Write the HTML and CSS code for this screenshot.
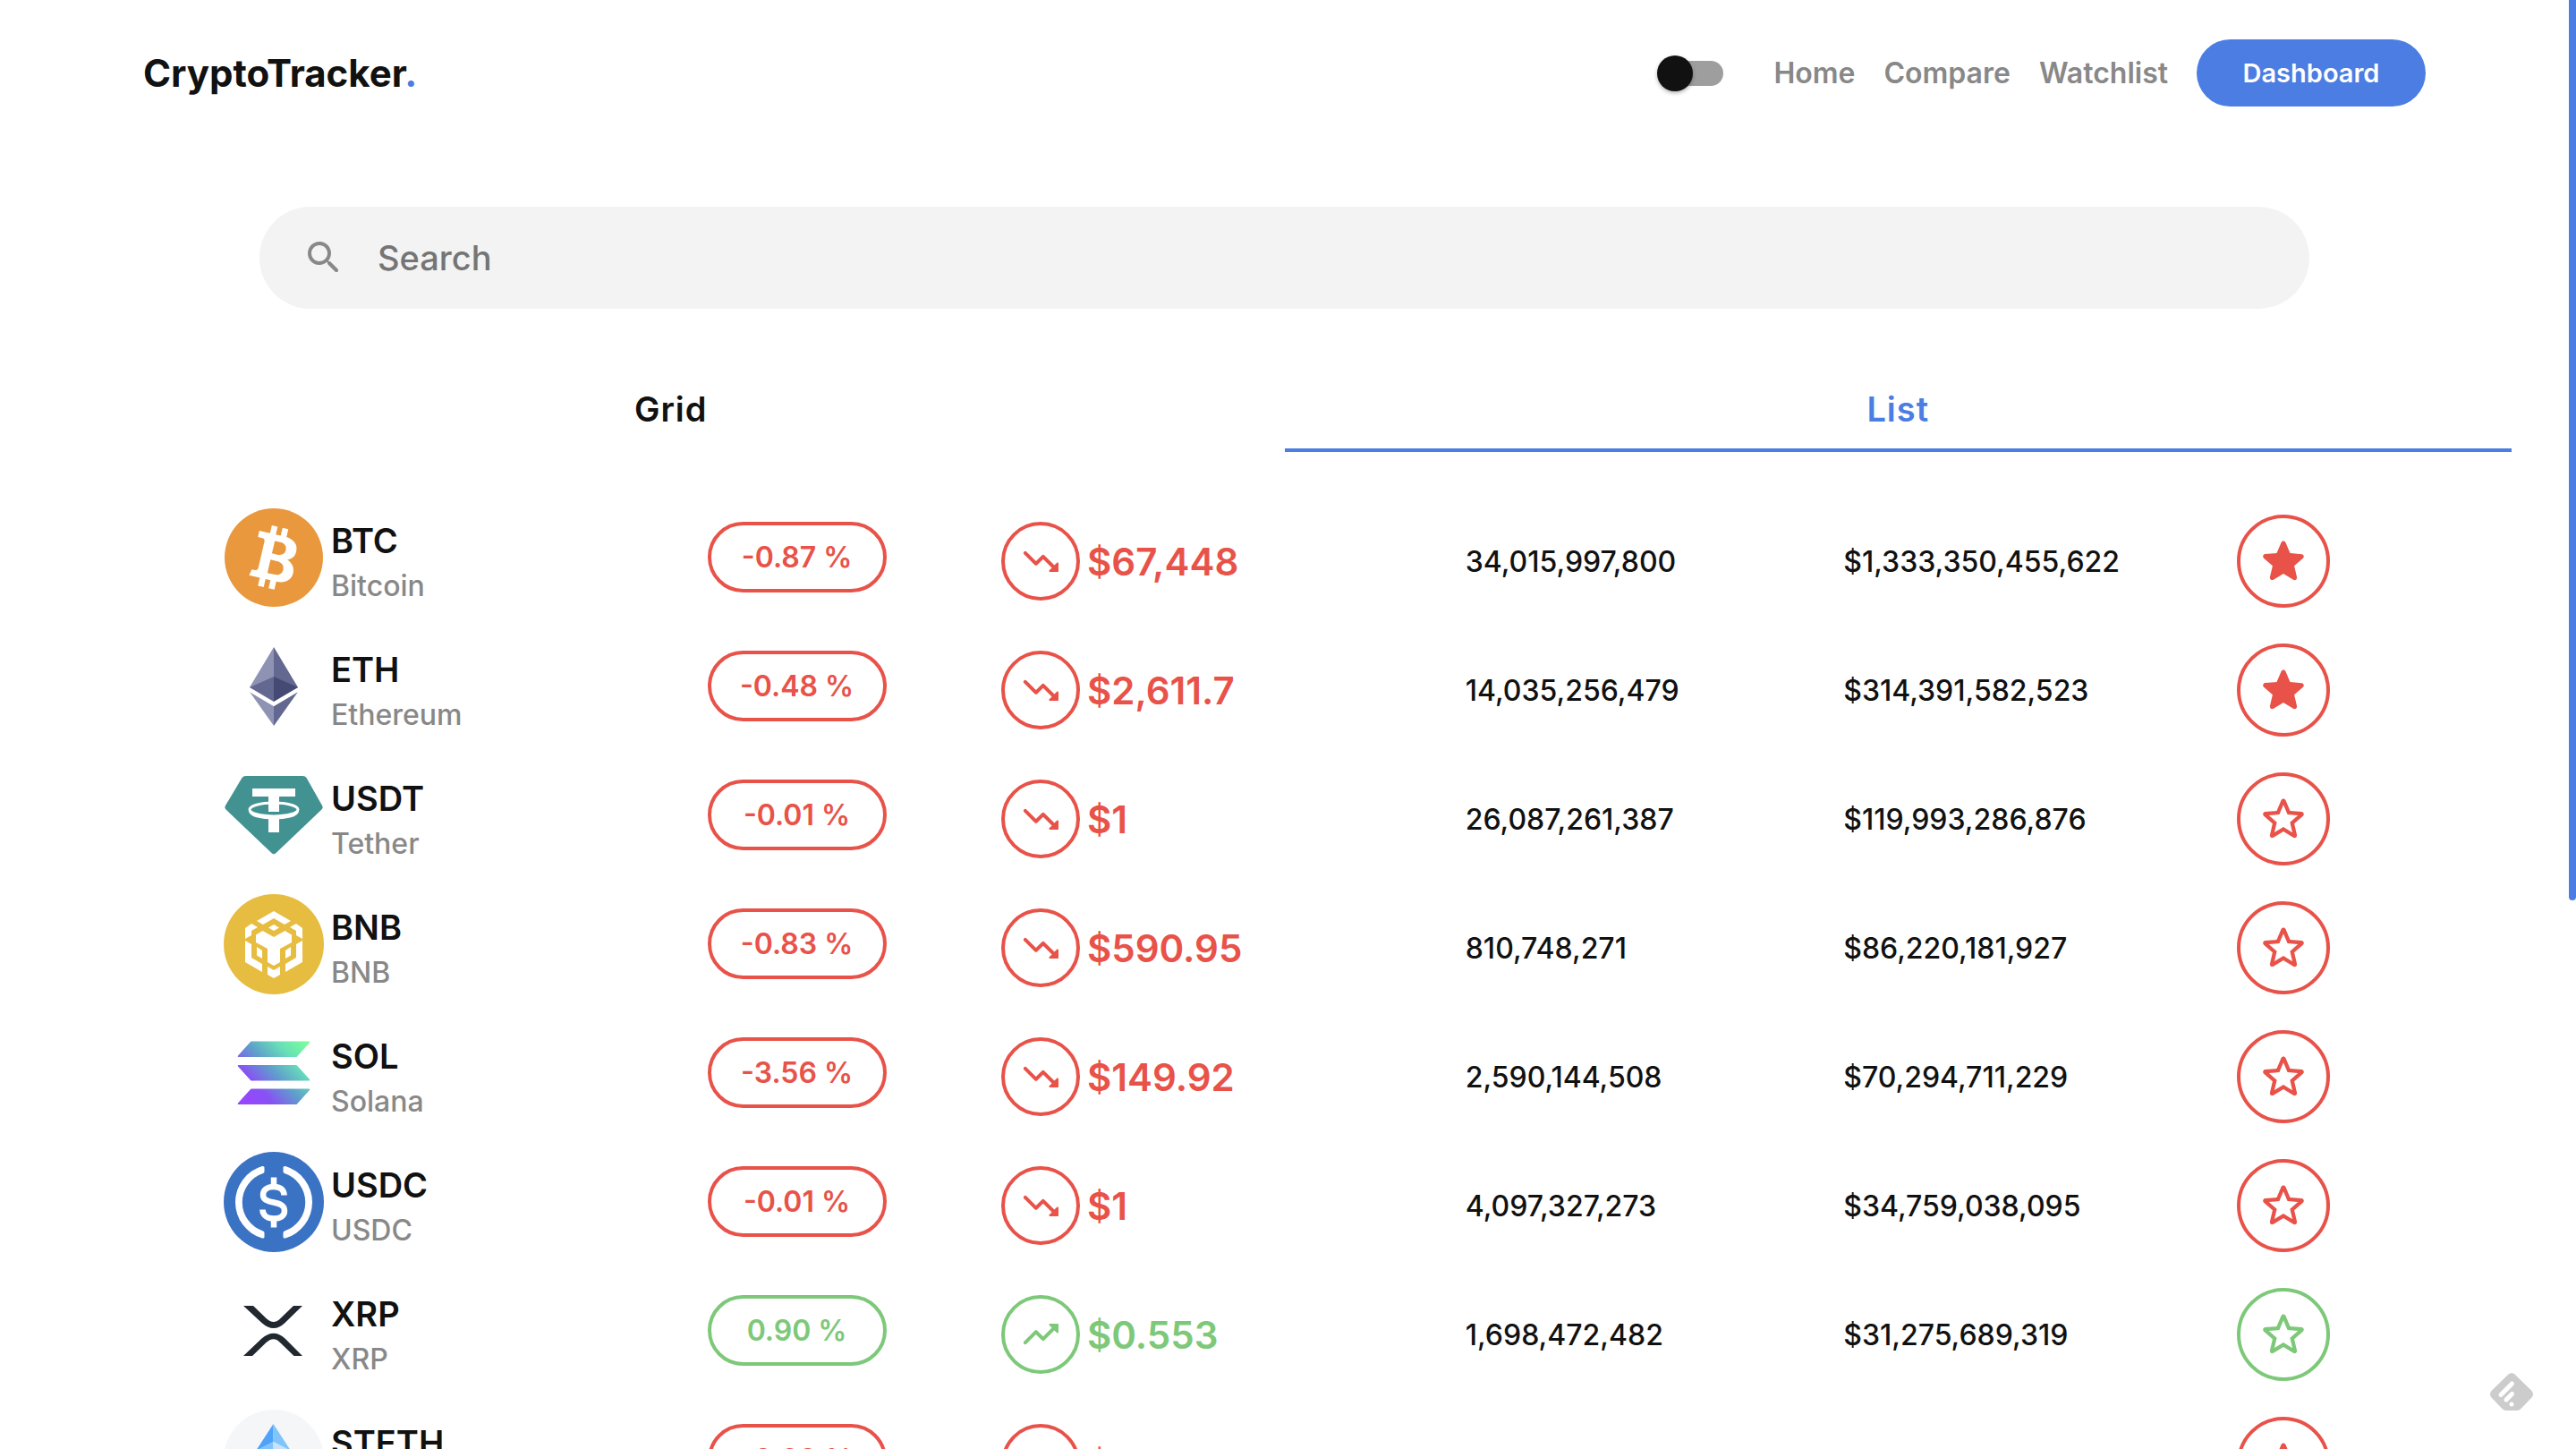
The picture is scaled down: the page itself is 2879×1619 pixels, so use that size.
FILE: index.html
```html
<!DOCTYPE html>
<html lang="en">
<head>
<meta charset="utf-8">
<title>CryptoTracker</title>
<link rel="stylesheet" href="styles.css">
</head>
<body>
<svg class="defs" aria-hidden="true">
  <defs>
    <linearGradient id="sol-gradient" gradientUnits="userSpaceOnUse" x1="20" y1="88" x2="92" y2="20">
      <stop offset="0" stop-color="#9945ff"/><stop offset=".25" stop-color="#8752f3"/><stop offset=".5" stop-color="#5f9fcb"/><stop offset=".75" stop-color="#68dfb8"/><stop offset="1" stop-color="#78ff9a"/>
    </linearGradient>
    <symbol id="down" viewBox="0 0 24 24"><path d="M16.85 17.15l1.44-1.44-4.88-4.88-3.29 3.29c-.39.39-1.02.39-1.41 0l-6-6.01a.996.996 0 1 1 1.41-1.41L9.41 12l3.29-3.29c.39-.39 1.02-.39 1.41 0l5.59 5.58 1.44-1.44c.31-.31.85-.09.85.35v4.29c0 .28-.22.5-.5.5h-4.29c-.44.01-.66-.53-.35-.84z"/></symbol>
    <symbol id="up" viewBox="0 0 24 24"><path d="M16.85 6.85l1.44 1.44-4.88 4.88-3.29-3.29a.996.996 0 0 0-1.41 0l-6 6.01c-.39.39-.39 1.02 0 1.41.39.39 1.02.39 1.41 0L9.41 12l3.29 3.29c.39.39 1.02.39 1.41 0l5.59-5.59 1.44 1.44c.31.31.85.09.85-.35V6.5c.01-.28-.21-.5-.49-.5h-4.29c-.45 0-.67.54-.36.85z"/></symbol>
    <symbol id="star-on" viewBox="0 0 24 24"><path d="m12 17.27 4.15 2.51c.76.46 1.69-.22 1.49-1.08l-1.1-4.72 3.67-3.18c.67-.58.31-1.68-.57-1.75l-4.83-.41-1.89-4.46c-.34-.81-1.5-.81-1.84 0L9.19 8.63l-4.83.41c-.88.07-1.24 1.17-.57 1.75l3.67 3.18-1.1 4.72c-.2.86.73 1.54 1.49 1.08z"/></symbol>
    <symbol id="star-off" viewBox="0 0 24 24"><path d="m19.65 9.04-4.84-.42-1.89-4.45c-.34-.81-1.5-.81-1.84 0L9.19 8.63l-4.83.41c-.88.07-1.24 1.17-.57 1.75l3.67 3.18-1.1 4.72c-.2.86.73 1.54 1.49 1.08l4.15-2.5 4.15 2.51c.76.46 1.69-.22 1.49-1.08l-1.1-4.73 3.67-3.18c.67-.58.32-1.68-.56-1.75zM12 15.4l-3.76 2.27 1-4.28-3.32-2.88 4.38-.38L12 6.1l1.71 4.04 4.38.38-3.32 2.88 1 4.28z"/></symbol>
  </defs>
</svg>
<div class="app">
  <header class="header">
    <h1 class="brand">CryptoTracker<span class="brand-dot">.</span></h1>
    <nav class="nav">
      <input class="switch" type="checkbox" role="switch" aria-label="Dark mode">
      <a class="nav-link" href="#home">Home</a>
      <a class="nav-link" href="#compare">Compare</a>
      <a class="nav-link" href="#watchlist">Watchlist</a>
      <button class="btn" type="button">Dashboard</button>
    </nav>
  </header>
  <main>
    <label class="search">
      <svg class="search-icon" viewBox="0 0 24 24" aria-hidden="true"><path d="M15.5 14h-.79l-.28-.27c1.2-1.4 1.82-3.31 1.48-5.34-.47-2.78-2.79-5-5.59-5.34-4.23-.52-7.79 3.04-7.27 7.27.34 2.8 2.56 5.12 5.34 5.59 2.03.34 3.94-.28 5.34-1.48l.27.28v.79l4.25 4.25c.41.41 1.08.41 1.49 0 .41-.41.41-1.08 0-1.49L15.5 14zm-6 0C7.01 14 5 11.99 5 9.5S7.01 5 9.5 5 14 7.01 14 9.5 11.99 14 9.5 14z"/></svg>
      <input class="search-input" type="text" placeholder="Search" aria-label="Search">
    </label>
    <div class="tabs" role="tablist">
      <button class="tab" role="tab" type="button" aria-selected="false">Grid</button>
      <button class="tab tab-active" role="tab" type="button" aria-selected="true">List</button>
    </div>
    <table class="coins">
      <colgroup><col class="col-coin"><col class="col-change"><col class="col-price"><col class="col-volume"><col class="col-cap"><col></colgroup>
      <tbody>
        <tr>
          <td><div class="coin"><svg class="logo" viewBox="0 0 112 112"><circle cx="56" cy="56" r="55" fill="#e9983d"/><g transform="translate(56 56) rotate(13) scale(1.02)"><path fill="#fff" fill-rule="evenodd" d="M-22-25H-10V-34H-3.500V-25H2V-34H8.500V-25C18-24 22.500-19 22.500-12C22.500-7 20-3 15-1C21 1 24.500 6 24.500 12C24.500 20 18 25 8.500 25V34H2V25H-3.500V34H-10V25H-22L-20.500 18H-17Q-14 18-14 15V-15Q-14-18-17-18H-22ZM-3-18V-4H3C8.500-4 11-7 11-11S8.500-18 3-18ZM-3 3V18H4C10 18 13 15 13 10.500S10 3 4 3Z"/></g></svg><div class="coin-text"><p class="symbol">BTC</p><p class="name">Bitcoin</p></div></div></td>
          <td><span class="pill">-0.87 %</span></td>
          <td><div class="price"><span class="trend"><svg viewBox="0 0 24 24"><use href="#down"/></svg></span>$67,448</div></td>
          <td>34,015,997,800</td><td>$1,333,350,455,622</td>
          <td><button class="star" type="button" aria-label="Remove BTC from watchlist"><svg viewBox="0 0 24 24"><use href="#star-on"/></svg></button></td>
        </tr>
        <tr>
          <td><div class="coin"><svg class="logo" viewBox="0 0 112 112"><path fill="#8e93b4" d="M56 12V100L29 62L56 78V71L29 57Z"/><path fill="#62688f" d="M56 12L83 57L56 71ZM56 78L83 62L56 100Z"/><path fill="#62688f" d="M56 45V73L29 57Z"/><path fill="#454a75" d="M56 45V73L83 57Z"/><path fill="#fff" d="M29 58L56 74L83 58V62L56 78L29 62Z"/></svg><div class="coin-text"><p class="symbol">ETH</p><p class="name">Ethereum</p></div></div></td>
          <td><span class="pill">-0.48 %</span></td>
          <td><div class="price"><span class="trend"><svg viewBox="0 0 24 24"><use href="#down"/></svg></span>$2,611.7</div></td>
          <td>14,035,256,479</td><td>$314,391,582,523</td>
          <td><button class="star" type="button" aria-label="Remove ETH from watchlist"><svg viewBox="0 0 24 24"><use href="#star-on"/></svg></button></td>
        </tr>
        <tr>
          <td><div class="coin"><svg class="logo" viewBox="0 0 112 112"><path fill="#429292" d="M24.500 12H88.500Q91 12 92.500 14L110 45Q111.500 47.500 109.500 49.500L58 98.500Q56 100 54 98.500L2.500 49.500Q.5 47.500 2 45L20.500 14Q22 12 24.500 12Z"/><ellipse cx="56" cy="49.500" rx="27" ry="7.500" fill="none" stroke="#fff" stroke-width="3"/><path fill="none" stroke="#fff" stroke-width="4" d="M30 51C30 61 82 61 82 51"/><path fill="#fff" d="M32 26H80V35H62V52H50V35H32ZM50 58H62V75H50Z"/></svg><div class="coin-text"><p class="symbol">USDT</p><p class="name">Tether</p></div></div></td>
          <td><span class="pill">-0.01 %</span></td>
          <td><div class="price"><span class="trend"><svg viewBox="0 0 24 24"><use href="#down"/></svg></span>$1</div></td>
          <td>26,087,261,387</td><td>$119,993,286,876</td>
          <td><button class="star" type="button" aria-label="Add USDT to watchlist"><svg viewBox="0 0 24 24"><use href="#star-off"/></svg></button></td>
        </tr>
        <tr>
          <td><div class="coin"><svg class="logo" viewBox="0 0 112 112"><circle cx="56" cy="56" r="56" fill="#e7bd41"/><path fill="#fff" d="M56 19L75 30L68 34L56 27L44 34L37 30ZM31 33L38 37L31 41V46L24 50V38ZM81 33L88 38V50L81 46V41L74 37ZM56 34L62 37.500L56 41L50 37.500ZM43.500 41L56 48L68.500 41L76 45.500V54L63 61V76L56 80L49 76V61L36 54V45.500ZM24 52L31 56V71L43 78V87L24 76ZM88 52V76L69 87V78L81 71V56ZM37 59L43 63V72L37 68.500ZM75 59V68.500L69 72V63ZM49 81L56 85L63 81V90L56 94L49 90Z"/></svg><div class="coin-text"><p class="symbol">BNB</p><p class="name">BNB</p></div></div></td>
          <td><span class="pill">-0.83 %</span></td>
          <td><div class="price"><span class="trend"><svg viewBox="0 0 24 24"><use href="#down"/></svg></span>$590.95</div></td>
          <td>810,748,271</td><td>$86,220,181,927</td>
          <td><button class="star" type="button" aria-label="Add BNB to watchlist"><svg viewBox="0 0 24 24"><use href="#star-off"/></svg></button></td>
        </tr>
        <tr>
          <td><div class="coin"><svg class="logo" viewBox="0 0 112 112"><path fill="url(#sol-gradient)" d="M31 20.500H95.500Q97 20.500 96 22L82 37.500Q81.500 38 81 38H16.500Q15 38 16 36.500L30 21Q30.500 20.500 31 20.500ZM16.500 47H81Q81.500 47 82 47.500L96 63Q97 64.500 95.500 64.500H31Q30.500 64.500 30 64L16 48.500Q15 47 16.500 47ZM31 73.500H95.500Q97 73.500 96 75L82 90.500Q81.500 91 81 91H16.500Q15 91 16 89.500L30 74Q30.500 73.500 31 73.500Z"/></svg><div class="coin-text"><p class="symbol">SOL</p><p class="name">Solana</p></div></div></td>
          <td><span class="pill">-3.56 %</span></td>
          <td><div class="price"><span class="trend"><svg viewBox="0 0 24 24"><use href="#down"/></svg></span>$149.92</div></td>
          <td>2,590,144,508</td><td>$70,294,711,229</td>
          <td><button class="star" type="button" aria-label="Add SOL to watchlist"><svg viewBox="0 0 24 24"><use href="#star-off"/></svg></button></td>
        </tr>
        <tr>
          <td><div class="coin"><svg class="logo" viewBox="0 0 112 112"><circle cx="56" cy="56" r="56" fill="#3b73c4"/><path fill="#fff" d="M45.500 17.500V22Q45.500 23.500 44 24A34 34 0 0 0 44 88.500Q45.500 89 45.500 90.500V95Q45.500 97 43 96.500A42 42 0 0 1 43 16Q45.500 15.500 45.500 17.500ZM66.500 17.500V22Q66.500 23.500 68 24A34 34 0 0 1 68 88.500Q66.500 89 66.500 90.500V95Q66.500 97 69 96.500A42 42 0 0 0 69 16Q66.500 15.500 66.500 17.500Z"/><g fill="none" stroke="#fff" stroke-width="6.500"><path d="M56 28.500V39M56 74V84.500"/><path d="M67.500 48.500C67.500 42 63 39 56 39S44 42.500 44 48S48.500 55 56 56.500S68 60 68 66S63 74.500 56 74.500S43.500 71 43.500 64.500"/></g></svg><div class="coin-text"><p class="symbol">USDC</p><p class="name">USDC</p></div></div></td>
          <td><span class="pill">-0.01 %</span></td>
          <td><div class="price"><span class="trend"><svg viewBox="0 0 24 24"><use href="#down"/></svg></span>$1</div></td>
          <td>4,097,327,273</td><td>$34,759,038,095</td>
          <td><button class="star" type="button" aria-label="Add USDC to watchlist"><svg viewBox="0 0 24 24"><use href="#star-off"/></svg></button></td>
        </tr>
        <tr class="gain">
          <td><div class="coin"><svg class="logo" viewBox="0 0 112 112"><path fill="#222830" d="M22 28H33L47.500 42Q56 50 63.500 42L78 28H88L68.500 47Q56 59 42.500 47ZM22 84H32L47 69.500Q56 61 63.500 69.500L78.500 84H88L68.500 64.500Q56 53 42.500 64.500Z"/></svg><div class="coin-text"><p class="symbol">XRP</p><p class="name">XRP</p></div></div></td>
          <td><span class="pill">0.90 %</span></td>
          <td><div class="price"><span class="trend"><svg viewBox="0 0 24 24"><use href="#up"/></svg></span>$0.553</div></td>
          <td>1,698,472,482</td><td>$31,275,689,319</td>
          <td><button class="star" type="button" aria-label="Add XRP to watchlist"><svg viewBox="0 0 24 24"><use href="#star-off"/></svg></button></td>
        </tr>
        <tr>
          <td><div class="coin"><svg class="logo" viewBox="0 0 112 112"><circle cx="56" cy="56" r="56" fill="#f4f6f8"/><path fill="#4ea2fa" d="M55.500 16V36L36 46Z"/><path fill="#7fc4fa" d="M55.500 16L75 46L55.500 36Z"/><path fill="#7fc4fa" d="M55.500 36V58L36 46Z"/><path fill="#c9e2f9" d="M55.500 36V58L75 46Z"/></svg><div class="coin-text"><p class="symbol">STETH</p><p class="name">Lido Staked Ether</p></div></div></td>
          <td><span class="pill">-0.60 %</span></td>
          <td><div class="price"><span class="trend"><svg viewBox="0 0 24 24"><use href="#down"/></svg></span>$2,611</div></td>
          <td>47,218,305</td><td>$25,554,218,402</td>
          <td><button class="star" type="button" aria-label="Add STETH to watchlist"><svg viewBox="0 0 24 24"><use href="#star-off"/></svg></button></td>
        </tr>
      </tbody>
    </table>
  </main>
</div>
<div class="scroll-thumb"></div>
<svg class="badge" viewBox="0 0 48 42" aria-hidden="true"><path fill="#ccc" d="M20.500 1.500Q24-1.500 27.500 1.500L46.500 20Q49.500 24 46.500 27.500L34.500 40Q32.500 42 30 42H18Q15.500 42 13.500 40L1.500 27.500Q-1.500 24 1.500 20Z"/><path fill="none" stroke="#fff" stroke-width="5" stroke-linecap="round" d="M12 24.500L24.500 12M18 30L24.500 23.500M24 35V35"/></svg>
</body>
</html>
```
FILE: styles.css
```css
:root {
  --blue: #4c7de2;
  --red: #e85249;
  --green: #7dc879;
  --ink: #111;
  --grey: #888;
}
* { box-sizing: border-box; }
body {
  margin: 0;
  background: #fff;
  color: var(--ink);
  font-family: Inter, "Liberation Sans", sans-serif;
}
button, input { font: inherit; }
p, h1 { margin: 0; }
svg { display: block; fill: currentColor; }
.defs { position: absolute; width: 0; height: 0; }
.app { height: 100vh; overflow: hidden; padding-right: 8px; }

.header {
  display: flex;
  align-items: center;
  justify-content: space-between;
  padding: 44px 160px;
}
.brand { font-size: 42px; font-weight: 700; line-height: 50px; }
.brand-dot { color: var(--blue); }
.nav { display: flex; align-items: center; gap: 32px; }
.nav-link { color: var(--grey); font-size: 32px; font-weight: 600; line-height: 40px; text-decoration: none; }
.switch {
  appearance: none;
  position: relative;
  width: 74px;
  height: 40px;
  margin: 0 24px 0 0;
}
.switch::before {
  content: "";
  position: absolute;
  inset: 6px 0 6px 6px;
  border-radius: 14px;
  background: #9e9e9e;
}
.switch::after {
  content: "";
  position: absolute;
  left: 0;
  top: 0;
  width: 40px;
  height: 40px;
  border-radius: 50%;
  background: var(--ink);
  box-shadow: 0 2px 4px rgba(0, 0, 0, .3);
}
.btn {
  width: 256px;
  height: 75px;
  padding: 0;
  border: 0;
  border-radius: 38px;
  background: var(--blue);
  color: #fff;
  font-size: 29px;
  font-weight: 600;
}

.search {
  display: flex;
  align-items: center;
  gap: 36px;
  height: 114px;
  margin: 68px 290px 64px;
  padding: 0 48px;
  border-radius: 57px;
  background: #f3f3f3;
  color: var(--grey);
}
.search-icon { width: 48px; height: 48px; }
.search-input {
  flex: 1;
  padding: 0;
  border: 0;
  outline: 0;
  background: none;
  font-size: 38px;
  font-weight: 500;
}
.search-input::placeholder { color: #757575; opacity: 1; }

.tabs { display: flex; margin: 0 64px 50px; }
.tab {
  flex: 1;
  height: 96px;
  padding: 4px 0 0;
  border: 0;
  border-bottom: 4px solid transparent;
  background: none;
  color: var(--ink);
  font-size: 38px;
  font-weight: 600;
  letter-spacing: 1px;
}
.tab-active { color: var(--blue); border-bottom-color: var(--blue); }

.coins {
  width: calc(100% - 500px);
  margin: 0 250px;
  border-collapse: collapse;
  table-layout: fixed;
}
.col-coin { width: 22.8%; }
.col-change { width: 13.85%; }
.col-price { width: 21.88%; }
.col-volume { width: 17.82%; }
.col-cap { width: 18.55%; }
.coins tr { height: 144px; color: var(--red); }
.coins .gain { color: var(--green); }
.coins td {
  padding: 0;
  color: var(--ink);
  font-size: 32px;
  font-weight: 500;
  vertical-align: middle;
  white-space: nowrap;
}
.coins td:nth-child(2), .coins td:nth-child(3), .coins td:last-child { color: inherit; }
.coin { display: flex; align-items: center; gap: 8px; padding-bottom: 8px; }
.coin-text { padding-top: 9px; }
.logo { width: 112px; height: 112px; }
.symbol { font-size: 38px; font-weight: 600; line-height: 46px; }
.name { padding-top: 9px; color: var(--grey); font-size: 32px; line-height: 38px; }
.pill {
  display: flex;
  align-items: center;
  justify-content: center;
  width: 200px;
  height: 79px;
  margin-bottom: 9px;
  border: 4px solid;
  border-radius: 40px;
  font-weight: 600;
}
.price { display: flex; align-items: center; gap: 8px; font-size: 42px; font-weight: 600; }
.trend, .star {
  display: flex;
  align-items: center;
  justify-content: center;
  width: 88px;
  height: 88px;
  border: 4px solid;
  border-radius: 50%;
}
.trend svg { width: 48px; height: 48px; }
.star { width: 104px; height: 104px; padding: 0; background: none; color: inherit; }
.star svg { width: 64px; height: 64px; }

.scroll-thumb {
  position: fixed;
  top: 0;
  right: 0;
  width: 8px;
  height: 1006px;
  border-radius: 0 0 4px 4px;
  background: var(--blue);
}
.badge { position: fixed; right: 48px; bottom: 43px; width: 48px; height: 42px; }
```
